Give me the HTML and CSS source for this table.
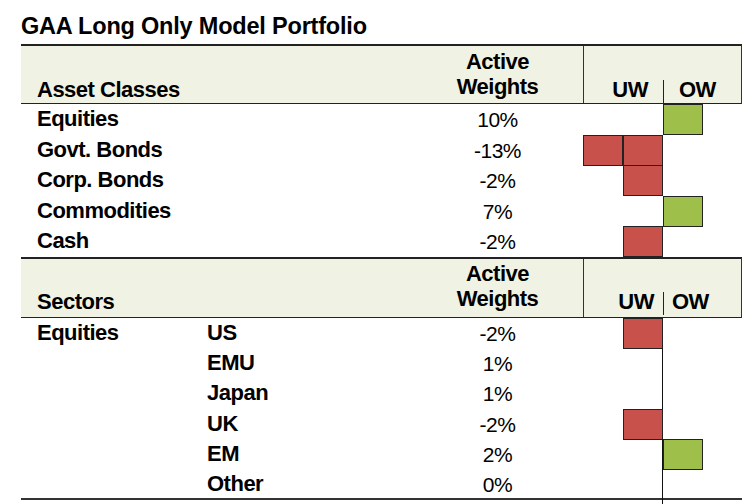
FILE: index.html
```html
<!DOCTYPE html>
<html>
<head>
<meta charset="utf-8">
<link rel="stylesheet" href="styles.css">
</head>
<body>
<div class="page">
  <h1 class="title">GAA Long Only Model Portfolio</h1>
  <div class="tbl">
    <div class="line hdr">
      <div class="hcell span2">Asset Classes</div>
      <div class="hcell center">Active<br>Weights</div>
      <div class="chart-h">
        <span class="uw">UW</span><span class="sep"></span><span class="ow">OW</span>
      </div>
    </div>
    <div class="line row r-a"><div class="lbl">Equities</div><div></div><div class="val">10%</div><div class="chart"><div class="box pos c3"></div></div></div>
    <div class="line row r-a"><div class="lbl">Govt. Bonds</div><div></div><div class="val">-13%</div><div class="chart"><div class="box neg c1"></div><div class="box neg c2"></div></div></div>
    <div class="line row r-a"><div class="lbl">Corp. Bonds</div><div></div><div class="val">-2%</div><div class="chart"><div class="box neg c2"></div></div></div>
    <div class="line row r-a"><div class="lbl">Commodities</div><div></div><div class="val">7%</div><div class="chart"><div class="box pos c3"></div></div></div>
    <div class="line row r-a"><div class="lbl">Cash</div><div></div><div class="val">-2%</div><div class="chart"><div class="box neg c2"></div></div></div>

    <div class="line hdr hdr2">
      <div class="hcell span2">Sectors</div>
      <div class="hcell center">Active<br>Weights</div>
      <div class="chart-h tight">
        <span class="uw">UW</span><span class="sep"></span><span class="ow">OW</span>
      </div>
    </div>
    <div class="line row r-s"><div class="lbl">Equities</div><div class="lbl sub">US</div><div class="val">-2%</div><div class="chart axis"><div class="box neg c2"></div></div></div>
    <div class="line row r-s"><div></div><div class="lbl sub">EMU</div><div class="val">1%</div><div class="chart axis"></div></div>
    <div class="line row r-s"><div></div><div class="lbl sub">Japan</div><div class="val">1%</div><div class="chart axis"></div></div>
    <div class="line row r-s"><div></div><div class="lbl sub">UK</div><div class="val">-2%</div><div class="chart axis"><div class="box neg c2"></div></div></div>
    <div class="line row r-s"><div></div><div class="lbl sub">EM</div><div class="val">2%</div><div class="chart axis"><div class="box pos c3"></div></div></div>
    <div class="line row r-s last"><div></div><div class="lbl sub">Other</div><div class="val">0%</div><div class="chart axis"></div></div>
    <div class="line tail"><div></div><div></div><div></div><div class="chart axis"></div></div>
  </div>
</div>
</body>
</html>
```

FILE: styles.css
```css
* { box-sizing: border-box; }
html, body { margin: 0; padding: 0; background: #fff; }
body {
  font-family: "Liberation Sans", Arial, sans-serif;
  color: #000;
}
.page {
  padding: 13px 0 0 21px;
  width: 747px;
  height: 504px;
  overflow: hidden;
}
.title {
  margin: 0 0 4px 0;
  font-size: 23.5px;
  line-height: 27px;
  font-weight: bold;
  letter-spacing: -0.2px;
}
.tbl { width: 721px; }
.line {
  display: grid;
  grid-template-columns: 186px 205px 171px 159px;
}
.hdr {
  height: 60px;
  background: #f0f3e3;
  border-top: 2px solid #222;
  border-bottom: 1px solid #222;
  border-right: 1px solid #333;
  align-items: end;
  font-weight: bold;
  font-size: 22px;
  letter-spacing: -0.5px;
  line-height: 25px;
}
.hdr2 { height: 61px; }
.hcell { padding-bottom: 2px; }
.hdr .span2 { grid-column: span 2; padding-left: 16px; padding-bottom: 1px; }
.hdr2 .span2 { padding-bottom: 3px; }
.hcell.center { text-align: center; padding-bottom: 4px; }
.hdr2 .hcell.center { padding-bottom: 6px; }
.chart-h {
  align-self: stretch;
  border-left: 1px solid #333;
  display: flex;
  align-items: flex-end;
}
.chart-h .uw {
  width: 79px;
  text-align: right;
  padding-right: 15px;
  padding-bottom: 1px;
}
.chart-h .sep {
  width: 1px;
  height: 23px;
  background: #222;
}
.chart-h .ow {
  padding-left: 15px;
  padding-bottom: 1px;
}
.chart-h.tight .uw { padding-right: 9px; padding-bottom: 3px; }
.chart-h.tight .ow { padding-left: 8px; padding-bottom: 3px; }
.chart-h.tight .sep { height: 23px; margin-bottom: 2px; }
.row { align-items: stretch; }
.r-a { height: 30.6px; }
.r-s { height: 30.2px; }
.lbl {
  font-size: 22px;
  letter-spacing: -0.5px;
  font-weight: bold;
  padding-left: 16px;
  line-height: 30px;
}
.lbl.sub { padding-left: 0; }
.val {
  font-size: 21px;
  letter-spacing: -0.5px;
  text-align: center;
  line-height: 30px;
  padding-top: 1px;
}
.chart {
  display: grid;
  grid-template-columns: 40px 40px 40px 39px;
}
.chart.axis {
  background: linear-gradient(to right, transparent 79px, #111 79px, #111 80px, transparent 80px);
}
.box {
  border: 1px solid #222;
  grid-row: 1;
}
.box.neg { background: #c9514b; }
.box.pos { background: #9ec04b; }
.c1 { grid-column: 1; }
.c2 { grid-column: 2; }
.c3 { grid-column: 3; }
.last { border-bottom: 2px solid #333; height: 31px; }
.tail { height: 8px; }
```
